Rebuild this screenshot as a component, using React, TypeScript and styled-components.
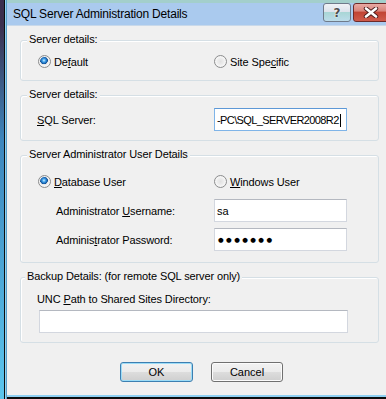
import React from 'react'
import styled, { createGlobalStyle } from 'styled-components'

const GlobalStyle = createGlobalStyle`
  html, body {
    margin: 0;
    padding: 0;
    background: #f0f0f0;
  }
  body {
    font-family: "Liberation Sans", Arial, sans-serif;
    font-size: 11px;
    letter-spacing: -0.12px;
    color: #000;
  }
`

const App: React.FC = () => (
  <>
    <GlobalStyle />
    <StyledWindow>
      <StyledLeftFrame />
      <StyledMain>
        <StyledTitleBar>
          <StyledTitle>SQL Server Administration Details</StyledTitle>
          <StyledCaptionButtons>
            <StyledHelpButton>?</StyledHelpButton>
            <StyledCloseButton>
              <svg width="16" height="11" viewBox="0 0 16 11">
                <path d="M3 1.5 L13 9.5 M13 1.5 L3 9.5" stroke="#4a1a1a" strokeWidth="4.4" strokeLinecap="round" />
                <path d="M3 1.5 L13 9.5 M13 1.5 L3 9.5" stroke="#fff" strokeWidth="2.6" strokeLinecap="round" />
              </svg>
            </StyledCloseButton>
          </StyledCaptionButtons>
        </StyledTitleBar>

        <StyledBody>
          <StyledGroup $height={41} $pad="9px 0 0">
            <StyledLegend>Server details:</StyledLegend>
            <StyledGrid>
              <StyledRadio $indent={17}>
                <StyledRadioDot $checked />
                <span>De<StyledKey>f</StyledKey>ault</span>
              </StyledRadio>
              <StyledRadio>
                <StyledRadioDot />
                <span>Site Spe<StyledKey>c</StyledKey>ific</span>
              </StyledRadio>
            </StyledGrid>
          </StyledGroup>

          <StyledGroup $height={46} $pad="12px 0 0">
            <StyledLegend>Server details:</StyledLegend>
            <StyledGrid>
              <StyledLabel $indent={16}><StyledKey>S</StyledKey>QL Server:</StyledLabel>
              <StyledField $focused>
                -PC\SQL_SERVER2008R2<StyledCaret />
              </StyledField>
            </StyledGrid>
          </StyledGroup>

          <StyledGroup $height={108} $pad="14px 0 0">
            <StyledLegend>Server Administrator User Details</StyledLegend>
            <StyledGrid>
              <StyledRadio $indent={17}>
                <StyledRadioDot $checked />
                <span><StyledKey>D</StyledKey>atabase User</span>
              </StyledRadio>
              <StyledRadio>
                <StyledRadioDot />
                <span><StyledKey>W</StyledKey>indows User</span>
              </StyledRadio>
              <StyledLabel $indent={35}>Administrator <StyledKey>U</StyledKey>sername:</StyledLabel>
              <StyledField>sa</StyledField>
              <StyledLabel $indent={35}>Adminis<StyledKey>t</StyledKey>rator Password:</StyledLabel>
              <StyledField>
                <StyledDots>●●●●●●●</StyledDots>
              </StyledField>
            </StyledGrid>
          </StyledGroup>

          <StyledGroup $height={66} $pad="13px 0 0">
            <StyledLegend $left={4}>Backup Details: (for remote SQL server only)</StyledLegend>
            <StyledStack>
              <StyledLabel $indent={16} $row={13}>UNC <StyledKey>P</StyledKey>ath to Shared Sites Directory:</StyledLabel>
              <StyledField $indent={18} $width={309} />
            </StyledStack>
          </StyledGroup>

          <StyledButtonRow>
            <StyledButton $default>OK</StyledButton>
            <StyledButton $width={72}>Cancel</StyledButton>
          </StyledButtonRow>
        </StyledBody>

        <StyledBottomFrame />
      </StyledMain>
    </StyledWindow>
  </>
)

const StyledWindow = styled.div`
  display: flex;
  width: 386px;
  height: 399px;
  overflow: hidden;
`

const StyledLeftFrame = styled.div`
  flex: none;
  width: 7px;
  background:
    linear-gradient(to right, transparent 0 4px, #0c0c0c 4px 5px, #8fd3f3 5px 6px, #5a9ec8 6px 7px),
    linear-gradient(#3b2f4e 0, #3b2f4e 24px, #3d86bd 140px, #5cc6ee 100%);
`

const StyledMain = styled.div`
  flex: 1;
  min-width: 0;
  display: flex;
  flex-direction: column;
`

const StyledTitleBar = styled.div`
  flex: none;
  height: 26px;
  display: flex;
  align-items: center;
  padding-left: 6px;
  background: linear-gradient(#a3cfcc 0 3px, #aacaee 3px 25px, #c9d9ea 25px);
`

const StyledTitle = styled.div`
  flex: 1;
  font-size: 12px;
  letter-spacing: -0.2px;
  color: #000;
  padding-top: 1px;
`

const StyledCaptionButtons = styled.div`
  align-self: flex-start;
  display: flex;
  gap: 2px;
  margin-top: 3px;
  margin-right: -7px;
`

const StyledHelpButton = styled.div`
  box-sizing: border-box;
  width: 28px;
  height: 19px;
  border: 1px solid #6f7a8a;
  border-radius: 3px;
  background: linear-gradient(#f0f2f6 0%, #dde3ec 45%, #a9d6d6 50%, #bcdcea 100%);
  display: flex;
  align-items: center;
  justify-content: center;
  font-family: "DejaVu Sans", sans-serif;
  font-weight: bold;
  font-size: 12px;
  color: #4d4d4d;
  text-shadow: 0 0 2px #fff, 0 0 1px #fff;
`

const StyledCloseButton = styled.div`
  box-sizing: border-box;
  width: 40px;
  height: 19px;
  border: 1px solid #6d2a2a;
  border-radius: 3px;
  background: linear-gradient(#e9aaa4 0%, #d9857c 40%, #c24434 50%, #cf5b4c 100%);
  display: flex;
  align-items: center;
  justify-content: center;
  padding-right: 4px;
`

const StyledBody = styled.div`
  flex: 1;
  display: flex;
  flex-direction: column;
  gap: 14px;
  padding: 14px 7px 0 13px;
  background: #f0f0f0;
`

const StyledBottomFrame = styled.div`
  flex: none;
  height: 4px;
  background: linear-gradient(#8fd0f2 0 2px, #0c0c0c 2px 4px);
`

const StyledGroup = styled.div<{ $height: number; $pad: string }>`
  position: relative;
  box-sizing: border-box;
  height: ${(p) => p.$height}px;
  padding: ${(p) => p.$pad};
  border: 1px solid #d5dfe5;
  border-radius: 3px;
  box-shadow: inset 1px 1px 0 #fff;
`

const StyledLegend = styled.span<{ $left?: number }>`
  position: absolute;
  top: -8px;
  left: ${(p) => p.$left ?? 6}px;
  padding: 0 2px;
  line-height: 13px;
  background: #f0f0f0;
  white-space: nowrap;
`

const StyledGrid = styled.div`
  display: grid;
  grid-template-columns: 193px 133px;
  grid-auto-rows: 23px;
  row-gap: 6px;
  align-items: center;
`

const StyledStack = styled.div`
  display: flex;
  flex-direction: column;
  gap: 4px;
`

const StyledRadio = styled.div<{ $indent?: number }>`
  display: flex;
  align-items: center;
  gap: 3px;
  padding-left: ${(p) => p.$indent ?? 0}px;
`

const StyledRadioDot = styled.span<{ $checked?: boolean }>`
  box-sizing: border-box;
  width: 13px;
  height: 13px;
  border-radius: 50%;
  border: 1px solid #8b8c8d;
  background: ${(p) =>
    p.$checked
      ? 'radial-gradient(circle at 45% 40%, #d5f0ff 0, #45a6ec 1.5px, #1a66b4 3px, #0f4f92 3.6px, #e4e4e4 4.1px, #f6f6f6 5.5px)'
      : 'radial-gradient(circle at 50% 50%, #e1e1e1 0, #ececec 3px, #f9f9f9 5.5px)'};
  box-shadow: inset 0 0 0 1px #f4f4f4;
`

const StyledKey = styled.u`
  text-decoration: underline;
  text-underline-offset: 1px;
`

const StyledLabel = styled.div<{ $indent?: number; $row?: number }>`
  padding-left: ${(p) => p.$indent ?? 0}px;
  line-height: ${(p) => p.$row ?? 13}px;
  white-space: nowrap;
  padding-top: 2px;
`

const StyledField = styled.div<{ $focused?: boolean; $indent?: number; $width?: number }>`
  box-sizing: border-box;
  height: 23px;
  width: ${(p) => (p.$width ? `${p.$width}px` : 'auto')};
  margin-left: ${(p) => p.$indent ?? 0}px;
  display: flex;
  align-items: center;
  padding: 1px 2px 0;
  background: #fff;
  border: 1px solid ${(p) => (p.$focused ? '#7fb4e8' : '#d3d7df')};
  border-top-color: ${(p) => (p.$focused ? '#5d98d6' : '#b4b8c0')};
  letter-spacing: ${(p) => (p.$focused ? '-0.6px' : '-0.12px')};
  white-space: nowrap;
  overflow: hidden;
`

const StyledCaret = styled.span`
  display: inline-block;
  width: 1px;
  height: 13px;
  margin-left: 1px;
  background: #000;
`

const StyledDots = styled.span`
  font-family: "DejaVu Sans", sans-serif;
  font-size: 6.5px;
  letter-spacing: 2.4px;
  padding-left: 1px;
`

const StyledButtonRow = styled.div`
  display: flex;
  gap: 18px;
  margin-top: 5px;
  padding-left: 100px;
`

const StyledButton = styled.button<{ $default?: boolean; $width?: number }>`
  box-sizing: border-box;
  width: ${(p) => p.$width ?? 73}px;
  height: 20px;
  padding: 0;
  font: inherit;
  color: #000;
  border: 1px solid ${(p) => (p.$default ? '#3c7fb1' : '#707070')};
  border-radius: 3px;
  background: linear-gradient(#f2f2f2 0%, #ebebeb 50%, #dddddd 50%, #cfcfcf 100%);
  box-shadow: inset 0 0 0 1px ${(p) => (p.$default ? '#9cdcf7' : '#fbfbfb')};
`

export default App
